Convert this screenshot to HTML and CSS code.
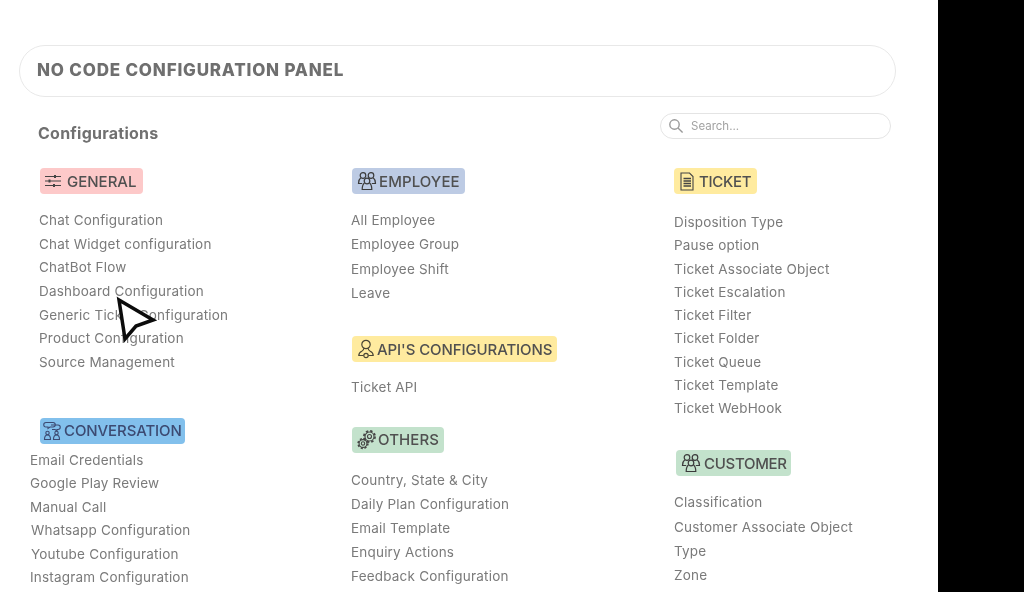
FILE: index.html
```html
<!DOCTYPE html>
<html lang="en">
<head>
<meta charset="utf-8">
<title>No Code Configuration Panel</title>
<link rel="stylesheet" href="styles.css">
</head>
<body>
<div class="stage">
  <main class="page">
    <header class="title-bar"><h1>NO CODE CONFIGURATION PANEL</h1></header>
    <div class="toolbar">
      <h2>Configurations</h2>
      <label class="search">
        <svg width="16" height="16" viewBox="0 0 16 16" fill="none" stroke="#9a9a9a" stroke-width="1.4"><circle cx="6.5" cy="6.5" r="4.7"/><path d="M10 10l4.6 4.6"/></svg>
        <span>Search...</span>
      </label>
    </div>
    <div class="columns">
      <div class="col col-a">
        <section class="group general">
          <div class="tag tag-red">
            <svg class="ico" width="18" height="14" viewBox="0 0 18 14" fill="none" stroke="#444" stroke-width="1.2"><path d="M1 2.5h16M1 7h16M1 11.5h16"/><path d="M11 1v3M5.5 5.5v3M10 10v3" stroke-width="2"/></svg>
            <span>GENERAL</span>
          </div>
          <ul>
            <li>Chat Configuration</li><li>Chat Widget configuration</li><li>ChatBot Flow</li><li>Dashboard Configuration</li><li>Generic Ticket Configuration</li><li>Product Configuration</li><li>Source Management</li>
          </ul>
        </section>
        <section class="group conversation">
          <div class="tag tag-blue">
            <svg class="ico" width="18" height="20" viewBox="0 0 18 20" fill="none" stroke="#3c4a72" stroke-width="1.1"><path d="M3 1.500h7a2 2 0 0 1 0 4.500H7L5 7.500V6H3a2.250 2.250 0 0 1 0-4.500z"/><path d="M8 4h7a2 2 0 0 1 0 4.500h-1V10l-2-1.500H9"/><circle cx="4.500" cy="12" r="1.700"/><path d="M1.500 18.500c0-2.500 1-4.500 3-4.500s3 2 3 4.500z"/><circle cx="13.500" cy="12" r="1.700"/><path d="M10.500 18.500c0-2.500 1-4.500 3-4.500s3 2 3 4.500z"/></svg>
            <span>CONVERSATION</span>
          </div>
          <ul>
            <li>Email Credentials</li><li>Google Play Review</li><li>Manual Call</li><li class="nudge">Whatsapp Configuration</li><li class="nudge">Youtube Configuration</li><li>Instagram Configuration</li>
          </ul>
        </section>
      </div>
      <div class="col col-b">
        <section class="group employee">
          <div class="tag tag-slate">
            <svg class="ico" width="20" height="20" viewBox="0 0 20 20" fill="none" stroke="#3a3a3a" stroke-width="1.2"><circle cx="6" cy="4.500" r="2.800"/><circle cx="14" cy="4.500" r="2.800"/><circle cx="10" cy="10" r="2.800"/><path d="M3.800 6.800C2.200 8 1.500 10 1.500 12.500h3.700M16.200 6.800c1.600 1.200 2.300 3.200 2.300 5.700h-3.700"/><path d="M7.500 12c-1.600 1.100-2.300 3-2.300 6.500h9.600c0-3.500-.7-5.400-2.300-6.500"/></svg>
            <span>EMPLOYEE</span>
          </div>
          <ul>
            <li>All Employee</li><li>Employee Group</li><li>Employee Shift</li><li>Leave</li>
          </ul>
        </section>
        <section class="group api">
          <div class="tag tag-yellow">
            <svg class="ico" width="18" height="20" viewBox="0 0 18 20" fill="none" stroke="#4a4636" stroke-width="1.2"><circle cx="9" cy="5.500" r="4.200"/><path d="M6.800 9.200c0 1.500-.5 2.300-2 3-1.800.8-3 1.800-3 4.300h4.800M11.200 9.200c0 1.500.5 2.300 2 3 1.800.8 3 1.800 3 4.300h-4.800"/><circle cx="9" cy="16.500" r="2.200"/></svg>
            <span>API'S CONFIGURATIONS</span>
          </div>
          <ul><li>Ticket API</li></ul>
        </section>
        <section class="group others">
          <div class="tag tag-green">
            <svg class="ico" width="19" height="20" viewBox="0 0 19 20" fill="none" stroke="#444" stroke-width="1.100"><circle cx="12.500" cy="6.500" r="2"/><circle cx="12.500" cy="6.500" r="4.500"/><circle cx="12.500" cy="6.500" r="5.600" stroke-width="1.700" stroke-dasharray="2.400 2"/><circle cx="6" cy="13.500" r="1.700"/><circle cx="6" cy="13.500" r="3.900"/><circle cx="6" cy="13.500" r="4.900" stroke-width="1.600" stroke-dasharray="2.100 1.750"/></svg>
            <span>OTHERS</span>
          </div>
          <ul>
            <li>Country, State &amp; City</li><li>Daily Plan Configuration</li><li>Email Template</li><li>Enquiry Actions</li><li>Feedback Configuration</li>
          </ul>
        </section>
      </div>
      <div class="col col-c">
        <section class="group ticket">
          <div class="tag tag-yellow">
            <svg class="ico" width="14" height="19" viewBox="0 0 14 19" fill="none" stroke="#444" stroke-width="1.100"><path d="M1 1h8.500L13 4.500V18H1z"/><path d="M3.500 6.500h7.500M3.500 9h7.500M3.500 11.500h7.500M3.500 14h7.500" stroke-width="1.400"/></svg>
            <span>TICKET</span>
          </div>
          <ul>
            <li>Disposition Type</li><li>Pause option</li><li>Ticket Associate Object</li><li>Ticket Escalation</li><li>Ticket Filter</li><li>Ticket Folder</li><li>Ticket Queue</li><li>Ticket Template</li><li>Ticket WebHook</li>
          </ul>
        </section>
        <section class="group customer">
          <div class="tag tag-green">
            <svg class="ico" width="20" height="20" viewBox="0 0 20 20" fill="none" stroke="#3a3a3a" stroke-width="1.2"><circle cx="6" cy="4.500" r="2.800"/><circle cx="14" cy="4.500" r="2.800"/><circle cx="10" cy="10" r="2.800"/><path d="M3.800 6.800C2.200 8 1.500 10 1.500 12.500h3.700M16.200 6.800c1.600 1.200 2.300 3.200 2.300 5.700h-3.700"/><path d="M7.500 12c-1.600 1.100-2.300 3-2.300 6.500h9.600c0-3.500-.7-5.400-2.300-6.500"/></svg>
            <span>CUSTOMER</span>
          </div>
          <ul>
            <li>Classification</li><li>Customer Associate Object</li><li>Type</li><li>Zone</li>
          </ul>
        </section>
      </div>
    </div>
    <svg class="cursor" width="42" height="50" viewBox="0 0 42 50"><path d="M4 5L38 25 21 31 10 44z" fill="#fff" stroke="#0c0c0c" stroke-width="3.500"/></svg>
  </main>
  <aside class="side"></aside>
</div>
</body>
</html>
```
FILE: styles.css
```css
html, body {
  margin: 0;
  height: 100%;
  overflow: hidden;
  background: #fff;
}
.stage {
  display: flex;
  width: 1024px;
  height: 592px;
  overflow: hidden;
  font-family: Inter, "Liberation Sans", sans-serif;
}
.page {
  position: relative;
  flex: 0 0 938px;
  box-sizing: border-box;
  padding: 45px 42px 0 19px;
  overflow: hidden;
  filter: blur(0.45px);
}
.side {
  flex: 1;
  background: #000;
}
.title-bar {
  display: flex;
  align-items: center;
  height: 52px;
  box-sizing: border-box;
  padding: 0 0 2px 17px;
  border: 1px solid #e8e8e8;
  border-radius: 26px;
}
h1 {
  margin: 0;
  font-size: 17px;
  font-weight: 800;
  letter-spacing: 0.8px;
  color: #6f6f6f;
}
.toolbar {
  display: flex;
  justify-content: space-between;
  align-items: flex-start;
  padding: 16px 5px 0 19px;
}
h2 {
  margin: 10px 0 0;
  font-size: 16px;
  line-height: 20px;
  font-weight: 700;
  letter-spacing: 0.25px;
  color: #707070;
}
.search {
  display: flex;
  align-items: center;
  gap: 7px;
  width: 231px;
  height: 26px;
  box-sizing: border-box;
  padding-left: 7px;
  border: 1px solid #e4e4e4;
  border-radius: 13px;
  font-size: 11.5px;
  color: #a2a2a2;
}
.columns {
  display: flex;
  padding-top: 25px;
}
.col { display: flex; flex-direction: column; box-sizing: border-box; }
.col-a { flex: 0 0 332px; padding-left: 20px; }
.col-b { flex: 0 0 323px; }
.tag {
  display: inline-flex;
  align-self: flex-start;
  align-items: center;
  gap: 4px;
  height: 26px;
  box-sizing: border-box;
  padding: 0 5px;
  border-radius: 4px;
  font-size: 15px;
  font-weight: 500;
  color: #505050;
  white-space: nowrap;
}
.group { display: flex; flex-direction: column; }
.ico { flex: none; }
.col-a .tag, .col-b .tag { margin-left: 1px; }
.tag-red { background: #fdc9c9; gap: 5px; padding: 0 6px 0 4px; }
.tag-blue { background: #82c0ec; color: #3c4a72; padding: 0 3px; gap: 3px; letter-spacing: -0.1px; }
.tag-slate { background: #bdcbe4; letter-spacing: 0.1px; gap: 2px; }
.tag-yellow { background: #ffeb9f; letter-spacing: -0.1px; gap: 2px; }
.tag-green { background: #c3e2cc; gap: 2px; letter-spacing: 0.1px; }
ul {
  list-style: none;
  margin: 14px 0 0;
  padding: 0;
  font-size: 13.5px;
  letter-spacing: 0.2px;
  color: #7a7a7a;
  white-space: nowrap;
}
li { height: 23.7px; line-height: 23.7px; }
.general ul { margin-top: 15px; }
.conversation { margin-top: 43px; }
.conversation ul { margin: 5px 0 0 -9px; }
.conversation li { height: 23.5px; line-height: 23.5px; }
.conversation .nudge { margin-left: 1px; }
.employee li { height: 24.3px; line-height: 24.3px; }
.api { margin-top: 31px; }
.others { margin-top: 27px; }
.others ul { margin-top: 15px; }
.others li { height: 24px; line-height: 24px; }
.ticket .tag { letter-spacing: -0.3px; padding: 0 6px; gap: 5px; }
.ticket ul { margin-top: 17px; }
.ticket li { height: 23.25px; line-height: 23.25px; }
.customer { margin-top: 30px; padding-left: 2px; }
.customer .tag { letter-spacing: -0.3px; gap: 3px; padding: 0 4px 0 5px; }
.customer ul { margin: 14px 0 0 -2px; }
.customer li { height: 24.3px; line-height: 24.3px; }
.cursor {
  position: absolute;
  left: 115px;
  top: 295px;
}
```
